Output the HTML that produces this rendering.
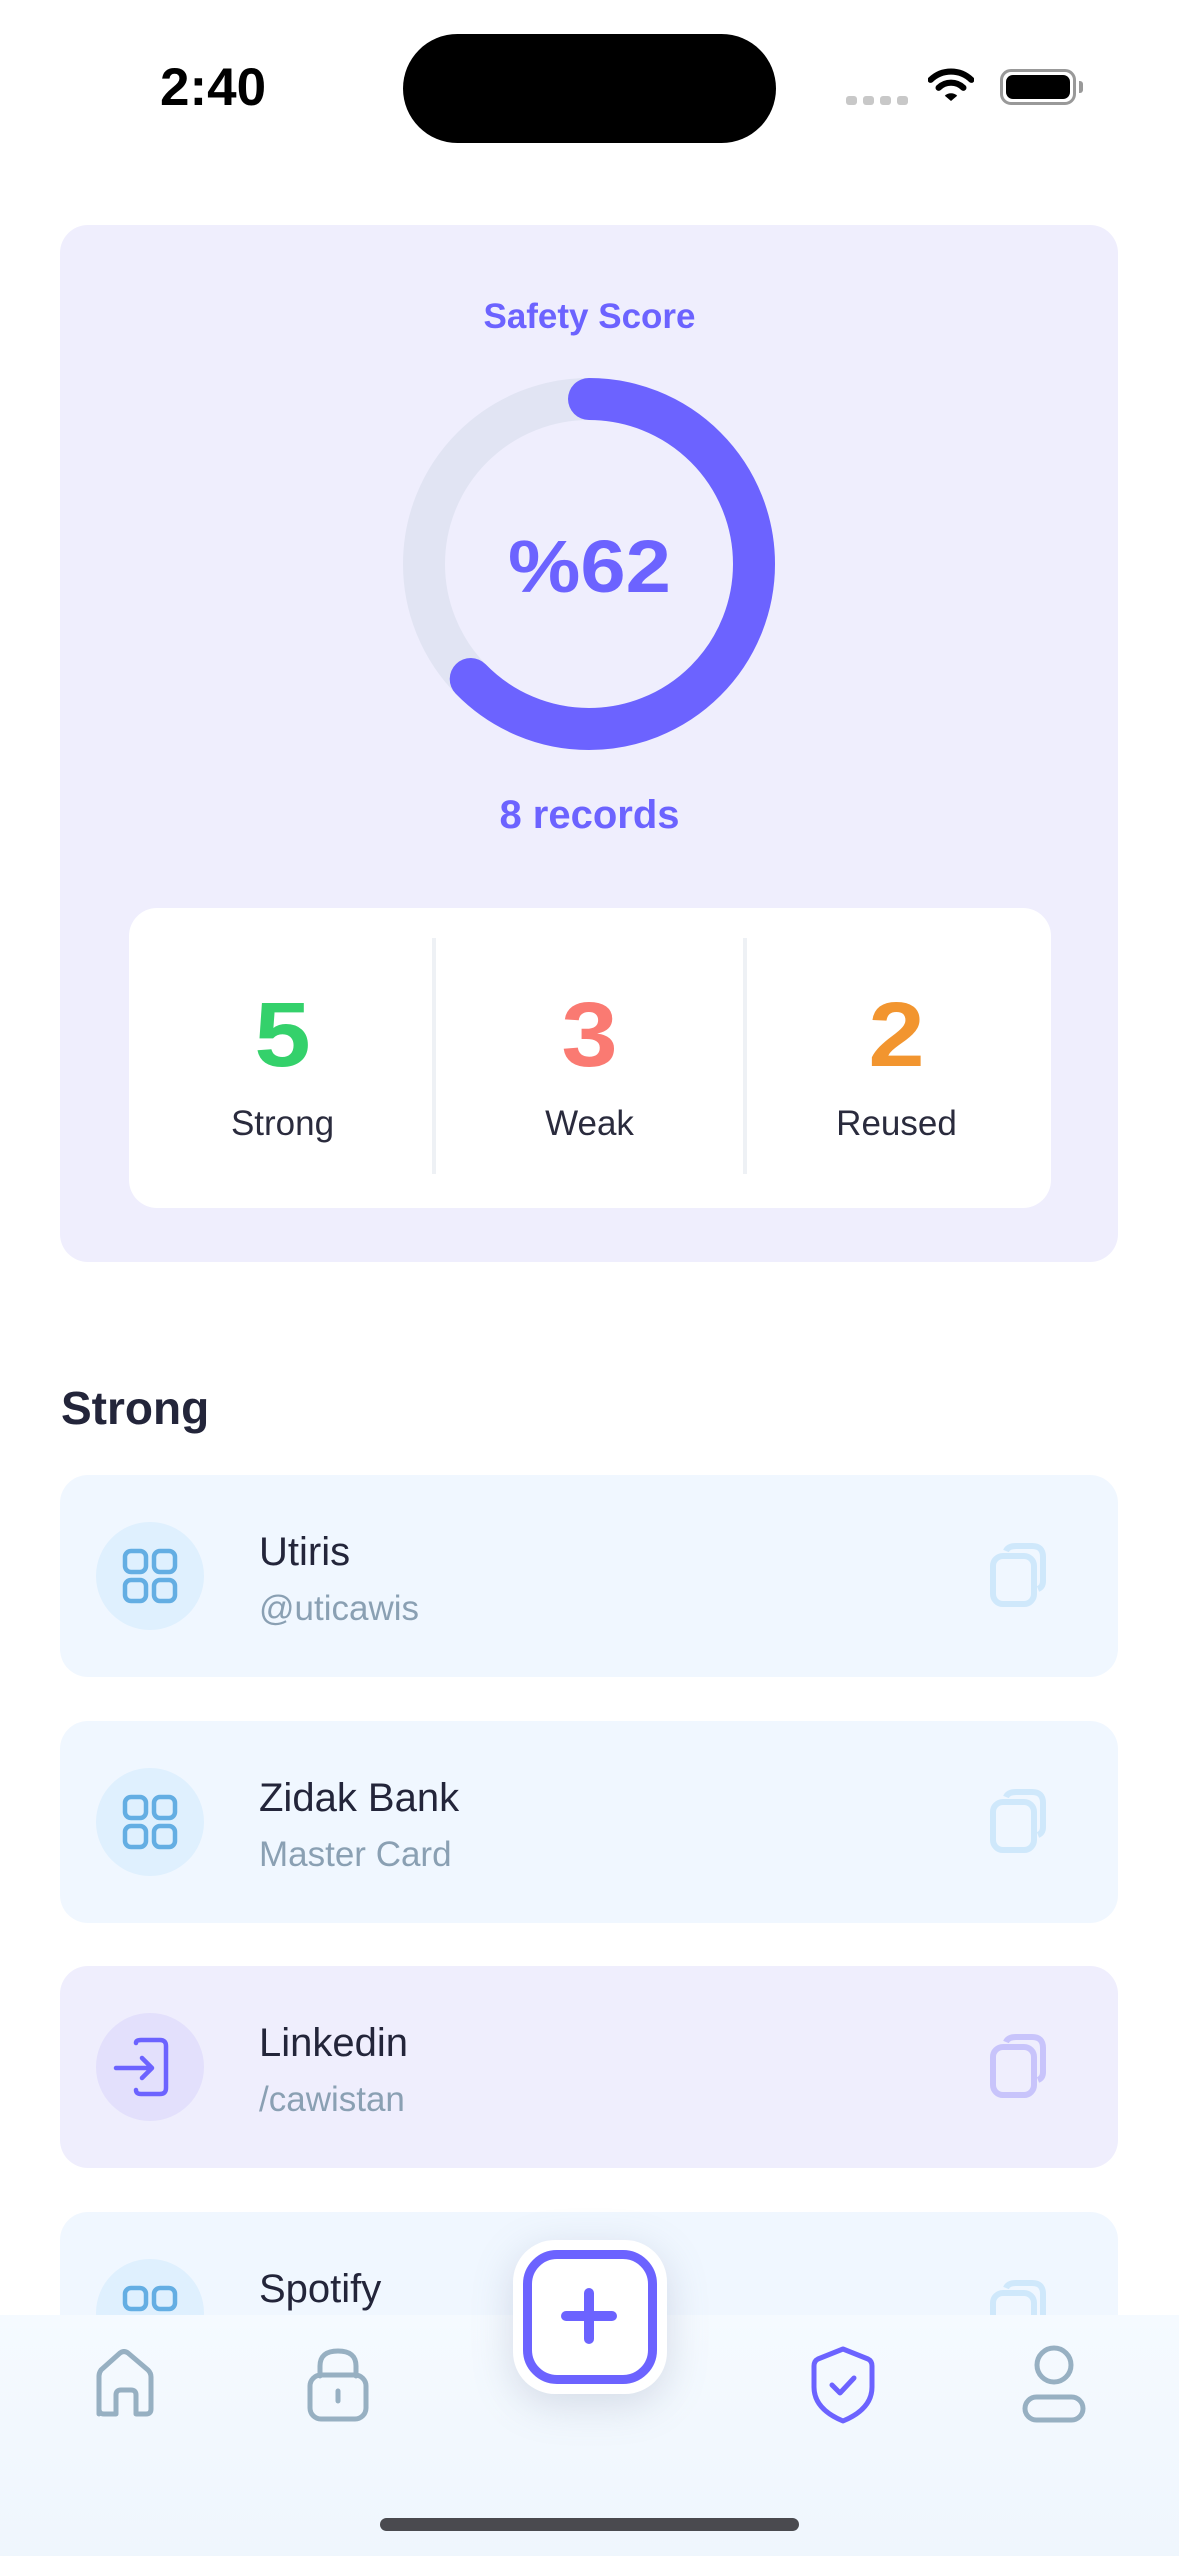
<!DOCTYPE html>
<html><head><meta charset="utf-8"><style>
*{margin:0;padding:0;box-sizing:border-box}
body{width:1179px;height:2556px;background:#fff;position:relative;overflow:hidden;font-family:"Liberation Sans",sans-serif}
.abs{position:absolute}
.card{left:60px;top:225px;width:1058px;height:1037px;background:#efeefd;border-radius:28px}
.stats{left:129px;top:908px;width:922px;height:300px;background:#fff;border-radius:28px}
.num{position:absolute;width:307px;text-align:center;top:75px;font-size:92px;font-weight:bold;transform:scaleX(1.1)}
.lab{position:absolute;width:307px;text-align:center;top:196px;font-size:35px;color:#2a2b3d}
.div{position:absolute;top:30px;width:4px;height:236px;background:#eef1f5}
.row{left:60px;width:1058px;height:202px;border-radius:28px;background:#f0f7ff}
.ic{position:absolute;left:36px;top:47px;width:108px;height:108px;border-radius:54px;background:#dff0fe}
.t{position:absolute;left:199px;top:55px;font-size:40px;color:#23253a}
.s{position:absolute;left:199px;top:114px;font-size:35px;color:#8aa0b3}
.cp{position:absolute;left:930px;top:68px}
</style></head><body>
<div class="abs" style="left:160px;top:57px;font-size:53px;font-weight:bold;color:#000">2:40</div>
<div class="abs" style="left:403px;top:34px;width:373px;height:109px;border-radius:55px;background:#000"></div>
<div class="abs" style="left:846px;top:96px;display:flex;gap:6px"><span style="width:11px;height:9px;background:#c8c8c8;border-radius:3px"></span><span style="width:11px;height:9px;background:#c8c8c8;border-radius:3px"></span><span style="width:11px;height:9px;background:#c8c8c8;border-radius:3px"></span><span style="width:11px;height:9px;background:#c8c8c8;border-radius:3px"></span></div>
<svg class="abs" style="left:928px;top:68px" width="46" height="36" viewBox="0 0 52 40"><path d="M3 13 A33 33 0 0 1 49 13" stroke="#000" stroke-width="7" fill="none" stroke-linecap="round"/><path d="M12 22 A20 20 0 0 1 40 22" stroke="#000" stroke-width="7" fill="none" stroke-linecap="round"/><path d="M19 31 L26 37 L33 31 A10 10 0 0 0 19 31Z" fill="#000"/></svg>
<div class="abs" style="left:1000px;top:69px;width:76px;height:36px;border:3px solid #999;border-radius:11px;padding:3px"><div style="width:100%;height:100%;background:#000;border-radius:7px"></div></div>
<div class="abs" style="left:1079px;top:81px;width:4px;height:12px;background:#999;border-radius:0 3px 3px 0"></div>

<div class="abs card"></div>
<div class="abs" style="left:0;width:1179px;top:297px;text-align:center;font-size:35px;font-weight:bold;color:#6c63ff">Safety Score</div>
<svg class="abs" style="left:400px;top:375px" width="378" height="378" viewBox="0 0 378 378">
<circle cx="189" cy="189" r="165" fill="none" stroke="#e1e4f3" stroke-width="42"/>
<circle cx="189" cy="189" r="165" fill="none" stroke="#6c63ff" stroke-width="42" stroke-linecap="round" stroke-dasharray="650 1100" transform="rotate(-90 189 189)"/>
</svg>
<div class="abs" style="left:0;width:1179px;top:524px;text-align:center;font-size:74px;font-weight:bold;color:#6c63ff;transform:scaleX(1.1)">%62</div>
<div class="abs" style="left:0;width:1179px;top:793px;text-align:center;font-size:40px;font-weight:bold;color:#6c63ff">8 records</div>
<div class="abs stats">
<div class="num" style="left:0;color:#34d16b">5</div><div class="lab" style="left:0">Strong</div>
<div class="div" style="left:303px"></div>
<div class="num" style="left:307px;color:#fa7a72">3</div><div class="lab" style="left:307px">Weak</div>
<div class="div" style="left:614px"></div>
<div class="num" style="left:614px;color:#f2952f">2</div><div class="lab" style="left:614px">Reused</div>
</div>

<div class="abs" style="left:61px;top:1381px;font-size:46px;font-weight:bold;color:#23253a">Strong</div>

<div class="abs row" style="top:1475px">
<div class="ic"><svg width="108" height="108"><g fill="none" stroke="#64aee3" stroke-width="4.5"><rect x="29" y="29" width="21" height="21" rx="6"/><rect x="58" y="29" width="21" height="21" rx="6"/><rect x="29" y="58" width="21" height="21" rx="6"/><rect x="58" y="58" width="21" height="21" rx="6"/></g></svg></div>
<div class="t">Utiris</div><div class="s">@uticawis</div>
<svg class="cp" width="70" height="70"><g fill="none" stroke="#cfe8fb" stroke-width="6"><path d="M16 8 Q18 3 26 3 H42 Q53 3 53 14 V38 Q53 44 48 46"/><rect x="3" y="13" width="41" height="48" rx="10"/></g></svg>
</div>
<div class="abs row" style="top:1721px">
<div class="ic"><svg width="108" height="108"><g fill="none" stroke="#64aee3" stroke-width="4.5"><rect x="29" y="29" width="21" height="21" rx="6"/><rect x="58" y="29" width="21" height="21" rx="6"/><rect x="29" y="58" width="21" height="21" rx="6"/><rect x="58" y="58" width="21" height="21" rx="6"/></g></svg></div>
<div class="t">Zidak Bank</div><div class="s">Master Card</div>
<svg class="cp" width="70" height="70"><g fill="none" stroke="#cfe8fb" stroke-width="6"><path d="M16 8 Q18 3 26 3 H42 Q53 3 53 14 V38 Q53 44 48 46"/><rect x="3" y="13" width="41" height="48" rx="10"/></g></svg>
</div>
<div class="abs row" style="top:1966px;background:#efeefd">
<div class="ic" style="background:#e3e0fc"><svg width="108" height="108"><g fill="none" stroke="#6c63ff" stroke-width="4.5" stroke-linecap="round" stroke-linejoin="round"><path d="M40 30 Q40 27 45 27 H64 Q70 27 70 33 V75 Q70 81 64 81 H45 Q40 81 40 77"/><path d="M20 55 H56 M46 45 L56 55 L46 65"/></g></svg></div>
<div class="t">Linkedin</div><div class="s">/cawistan</div>
<svg class="cp" width="70" height="70"><g fill="none" stroke="#c8c4fb" stroke-width="6"><path d="M16 8 Q18 3 26 3 H42 Q53 3 53 14 V38 Q53 44 48 46"/><rect x="3" y="13" width="41" height="48" rx="10"/></g></svg>
</div>
<div class="abs row" style="top:2212px">
<div class="ic"><svg width="108" height="108"><g fill="none" stroke="#64aee3" stroke-width="4.5"><rect x="29" y="29" width="21" height="21" rx="6"/><rect x="58" y="29" width="21" height="21" rx="6"/></g></svg></div>
<div class="t">Spotify</div>
<svg class="cp" width="70" height="70"><g fill="none" stroke="#cfe8fb" stroke-width="6"><path d="M16 8 Q18 3 26 3 H42 Q53 3 53 14 V38 Q53 44 48 46"/><rect x="3" y="13" width="41" height="48" rx="10"/></g></svg>
</div>

<div class="abs" style="left:0;top:2315px;width:1179px;height:241px;background:linear-gradient(180deg,#f5faff,#eff6fd)"></div>
<svg class="abs" style="left:92px;top:2349px" width="68" height="72"><path d="M7 65 V27 Q7 24 9 21 L28 4 Q32 1 36 4 L56 21 Q59 24 59 28 V60 Q59 65 54 65 H44 V46 Q44 41 39 41 H29 Q24 41 24 46 V65 H12 Q7 65 7 60Z" fill="none" stroke="#97b0c2" stroke-width="5" stroke-linejoin="round"/></svg>
<svg class="abs" style="left:304px;top:2346px" width="68" height="78"><g fill="none" stroke="#97b0c2" stroke-width="5" stroke-linecap="round"><path d="M16 30 V20 Q16 5 34 5 Q52 5 52 20 V30"/><rect x="6" y="29" width="56" height="44" rx="11"/><path d="M34 45 V55"/></g></svg>
<svg class="abs" style="left:808px;top:2345px" width="70" height="80"><g fill="none" stroke="#6c63ff" stroke-width="5" stroke-linecap="round" stroke-linejoin="round"><path d="M35 4 L60 14 Q64 16 64 21 V42 Q64 64 35 76 Q6 64 6 42 V21 Q6 16 10 14 Z"/><path d="M24 40 L32 48 L46 33"/></g></svg>
<svg class="abs" style="left:1019px;top:2345px" width="70" height="80"><g fill="none" stroke="#97b0c2" stroke-width="5"><ellipse cx="35" cy="20" rx="17" ry="17"/><rect x="6" y="52" width="58" height="23" rx="11.5"/></g></svg>

<div class="abs" style="left:513px;top:2240px;width:154px;height:154px;border-radius:42px;background:#fff;box-shadow:0 10px 40px rgba(120,130,160,.25)"></div>
<div class="abs" style="left:523px;top:2250px;width:134px;height:134px;border-radius:34px;border:9px solid #6c63ff;background:#fff"></div>
<div class="abs" style="left:561px;top:2311px;width:56px;height:10px;border-radius:5px;background:#6c63ff"></div>
<div class="abs" style="left:584px;top:2288px;width:10px;height:56px;border-radius:5px;background:#6c63ff"></div>

<div class="abs" style="left:380px;top:2518px;width:419px;height:13px;border-radius:7px;background:#4a4a4f"></div>
</body></html>
